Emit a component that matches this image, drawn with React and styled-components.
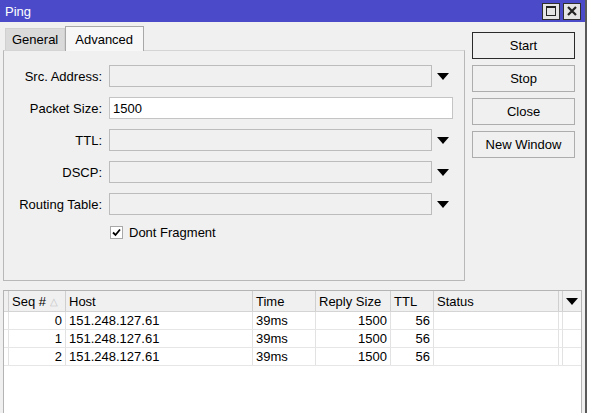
import React from "react";
import styled, { createGlobalStyle } from "styled-components";

const GlobalStyle = createGlobalStyle`
  html, body {
    margin: 0;
    padding: 0;
    background: #ffffff;
    font-family: "Liberation Sans", Arial, sans-serif;
    font-size: 13px;
    color: #000;
  }
`;

// --- Window frame ---

const Frame = styled.div`
  width: 585px;
  height: 413px;
  border-right: 2px solid #5a5a5a;
  background: #f0f0f0;
  display: flex;
  flex-direction: column;
  overflow: hidden;
`;

const TitleBar = styled.div`
  height: 22px;
  flex: none;
  background: #4b4bc9;
  color: #fff;
  display: flex;
  align-items: center;
  padding: 0 4px 0 5px;
  font-size: 13px;
`;

const TitleText = styled.span`
  flex: 1;
`;

const TitleButton = styled.div`
  width: 16px;
  height: 15px;
  margin-left: 3px;
  background: #e4e4e4;
  border: 1px solid #2e2e2e;
  display: flex;
  align-items: center;
  justify-content: center;
`;

// --- Top area: tabs + buttons ---

const TopArea = styled.div`
  display: flex;
  padding: 3px 0 0 3px;
`;

const TabBlock = styled.div`
  width: 462px;
  display: flex;
  flex-direction: column;
`;

const TabRow = styled.div`
  display: flex;
  align-items: flex-end;
  height: 25px;
  padding-left: 2px;
`;

const Tab = styled.div`
  height: ${(p) => (p.active ? "25px" : "22px")};
  padding: 0 ${(p) => (p.active ? "10px" : "6px")} 0 ${(p) => (p.active ? "9px" : "6px")};
  display: flex;
  align-items: center;
  background: ${(p) => (p.active ? "#f7f7f7" : "#dadada")};
  border: 1px solid ${(p) => (p.active ? "#a8a8a8" : "#d0d0d0")};
  border-bottom: none;
  box-sizing: border-box;
  margin-bottom: ${(p) => (p.active ? "-1px" : "0")};
  position: relative;
  z-index: ${(p) => (p.active ? 1 : 0)};
`;

const Panel = styled.div`
  height: 231px;
  border: 1px solid #b8b8b8;
  border-top-color: #d4d4d4;
  box-sizing: border-box;
  padding-top: 14px;
  display: flex;
  flex-direction: column;
  gap: 10px;
`;

const FormRow = styled.div`
  display: flex;
  align-items: center;
  height: 22px;
`;

const Label = styled.div`
  width: 98px;
  text-align: right;
  padding-right: 7px;
  white-space: nowrap;
`;

const Field = styled.div`
  width: ${(p) => (p.wide ? "344px" : "323px")};
  height: 22px;
  box-sizing: border-box;
  border: 1px solid ${(p) => (p.editable ? "#c4c4c4" : "#bcbcbc")};
  background: ${(p) => (p.editable ? "#ffffff" : "#f0f0f0")};
  display: flex;
  align-items: center;
  padding-left: 3px;
`;

const DropArrow = styled.div`
  width: 22px;
  display: flex;
  justify-content: center;
  align-items: center;
  &::after {
    content: "";
    border-left: 6px solid transparent;
    border-right: 6px solid transparent;
    border-top: 7px solid #000;
  }
`;

const CheckRow = styled.div`
  display: flex;
  align-items: center;
  padding-left: 106px;
  gap: 6px;
`;

const CheckBox = styled.div`
  width: 13px;
  height: 13px;
  box-sizing: border-box;
  border: 1px solid #a8a8a8;
  background: #fff;
  display: flex;
  align-items: center;
  justify-content: center;
`;

const ButtonColumn = styled.div`
  display: flex;
  flex-direction: column;
  gap: 6px;
  padding: 7px 0 0 7px;
`;

const Button = styled.div`
  width: 103px;
  height: 27px;
  box-sizing: border-box;
  border: 1px solid ${(p) => (p.primary ? "#2a2a2a" : "#adadad")};
  background: #f0f0f0;
  display: flex;
  align-items: center;
  justify-content: center;
`;

// --- Table ---

const Table = styled.div`
  margin: 9px 3px 0 3px;
  flex: 1;
  background: #fff;
  border: 1px solid #b4b4b4;
  border-bottom: none;
`;

const cols = "4px 57px 187px 63px 75px 43px 125px 4px 1fr";

const HeaderRow = styled.div`
  display: grid;
  grid-template-columns: ${cols};
  height: 20px;
  background: #f0f0f0;
  border-bottom: 1px solid #d4d4d4;
`;

const HeadCell = styled.div`
  border-left: 1px solid #cfcfcf;
  padding-left: 3px;
  display: flex;
  align-items: center;
  white-space: nowrap;
  &:first-child {
    border-left: none;
  }
`;

const SortMark = styled.span`
  color: #c4c4c4;
  font-size: 10px;
  margin-left: 4px;
`;

const MenuArrow = styled(HeadCell)`
  justify-content: center;
  padding-left: 0;
  &::after {
    content: "";
    border-left: 6px solid transparent;
    border-right: 6px solid transparent;
    border-top: 7px solid #000;
  }
`;

const DataRow = styled.div`
  display: grid;
  grid-template-columns: ${cols};
  height: 17px;
  border-bottom: 1px solid #e6e6e6;
`;

const Cell = styled.div`
  border-left: 1px solid #e2e2e2;
  padding: 0 3px;
  display: flex;
  align-items: center;
  justify-content: ${(p) => (p.right ? "flex-end" : "flex-start")};
  white-space: nowrap;
  &:first-child {
    border-left: none;
  }
`;

const rows = [
  { seq: 0, host: "151.248.127.61", time: "39ms", size: 1500, ttl: 56 },
  { seq: 1, host: "151.248.127.61", time: "39ms", size: 1500, ttl: 56 },
  { seq: 2, host: "151.248.127.61", time: "39ms", size: 1500, ttl: 56 },
];

const fields = [
  { label: "Src. Address:", drop: true },
  { label: "Packet Size:", value: "1500" },
  { label: "TTL:", drop: true },
  { label: "DSCP:", drop: true },
  { label: "Routing Table:", drop: true },
];

const App = () => {
  return (
    <>
      <GlobalStyle />
      <Frame>
        <TitleBar>
          <TitleText>Ping</TitleText>
          <TitleButton>
            <svg width="10" height="10" viewBox="0 0 10 10">
              <rect x="0.5" y="0.5" width="9" height="9" fill="none" stroke="#222" />
              <rect x="0" y="0" width="10" height="2" fill="#222" />
            </svg>
          </TitleButton>
          <TitleButton>
            <svg width="10" height="10" viewBox="0 0 10 10">
              <path d="M1 1 L9 9 M9 1 L1 9" stroke="#222" strokeWidth="2.2" />
            </svg>
          </TitleButton>
        </TitleBar>

        <TopArea>
          <TabBlock>
            <TabRow>
              <Tab>General</Tab>
              <Tab active>Advanced</Tab>
            </TabRow>
            <Panel>
              {fields.map((f) => (
                <FormRow key={f.label}>
                  <Label>{f.label}</Label>
                  {f.drop ? (
                    <>
                      <Field />
                      <DropArrow />
                    </>
                  ) : (
                    <Field wide editable>
                      {f.value}
                    </Field>
                  )}
                </FormRow>
              ))}
              <CheckRow>
                <CheckBox>
                  <svg width="9" height="9" viewBox="0 0 9 9">
                    <path d="M1 4.5 L3.5 7 L8 1.5" fill="none" stroke="#000" strokeWidth="1.8" />
                  </svg>
                </CheckBox>
                <span>Dont Fragment</span>
              </CheckRow>
            </Panel>
          </TabBlock>

          <ButtonColumn>
            <Button primary>Start</Button>
            <Button>Stop</Button>
            <Button>Close</Button>
            <Button>New Window</Button>
          </ButtonColumn>
        </TopArea>

        <Table>
          <HeaderRow>
            <HeadCell />
            <HeadCell>
              Seq #<SortMark>△</SortMark>
            </HeadCell>
            <HeadCell>Host</HeadCell>
            <HeadCell>Time</HeadCell>
            <HeadCell>Reply Size</HeadCell>
            <HeadCell>TTL</HeadCell>
            <HeadCell>Status</HeadCell>
            <HeadCell />
            <MenuArrow />
          </HeaderRow>
          {rows.map((r) => (
            <DataRow key={r.seq}>
              <Cell />
              <Cell right>{r.seq}</Cell>
              <Cell>{r.host}</Cell>
              <Cell>{r.time}</Cell>
              <Cell right>{r.size}</Cell>
              <Cell right>{r.ttl}</Cell>
              <Cell />
              <Cell />
              <Cell />
            </DataRow>
          ))}
        </Table>
      </Frame>
    </>
  );
};

export default App;
